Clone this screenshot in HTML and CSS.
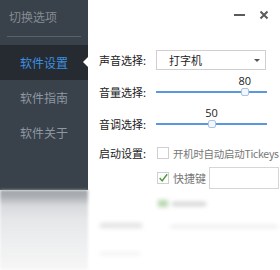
FILE: index.html
```html
<!DOCTYPE html>
<html lang="zh">
<head>
<meta charset="utf-8">
<link rel="stylesheet" href="styles.css">
</head>
<body>
<div class="stage">
  <div class="window">
    <aside class="sidebar">
      <div class="side-title">切换选项</div>
      <div class="side-sep"></div>
      <div class="side-item active">软件设置<span class="notch"></span></div>
      <div class="side-item">软件指南</div>
      <div class="side-item">软件关于</div>
    </aside>
    <main class="main">
      <div class="titlebar">
        <span class="btn-min"></span>
        <svg class="btn-close" width="10" height="10" viewBox="0 0 10 10"><path d="M1.5 1.5 L8.5 8.5 M8.5 1.5 L1.5 8.5" stroke="#5a5a5a" stroke-width="2"/></svg>
      </div>
      <div class="row r1">
        <span class="label">声音选择:</span>
        <div class="select"><span>打字机</span><span class="caret"></span></div>
      </div>
      <div class="row r2">
        <span class="label">音量选择:</span>
        <div class="slider"><div class="track"></div><div class="thumb" style="left:80%"><span class="val">80</span></div></div>
      </div>
      <div class="row r3">
        <span class="label">音调选择:</span>
        <div class="slider"><div class="track"></div><div class="thumb" style="left:50%"><span class="val">50</span></div></div>
      </div>
      <div class="row r4">
        <span class="label">启动设置:</span>
        <span class="check"></span>
        <span class="opt small">开机时自动启动Tickeys</span>
      </div>
      <div class="row r5">
        <span class="label"></span>
        <span class="check checked"><svg width="12" height="12" viewBox="0 0 12 12"><path d="M2 6 L5 9.5 L11 1.5" fill="none" stroke="#4d9a3c" stroke-width="1.8"/></svg></span>
        <span class="opt">快捷键</span>
        <span class="input"></span>
      </div>
    </main>
  </div>
  <div class="reflection">
    <div class="ref-side"></div>
    <div class="ref-main">
      <span class="blob b-green"></span>
      <span class="blob b-t1"></span>
      <span class="blob b-l1"></span>
      <span class="blob b-line"></span>
      <span class="blob b-l2"></span>
    </div>
  </div>
</div>
</body>
</html>
```
FILE: styles.css
```css
* { box-sizing: border-box; }
html, body { margin: 0; padding: 0; background: #fff; }
body { font-family: "Noto Sans CJK SC", "Noto Sans", sans-serif; width: 280px; height: 270px; overflow: hidden; }
.stage { width: 280px; height: 270px; }
.window { display: flex; height: 190px; }
.sidebar { flex: none; width: 88px; background: #39414a; display: flex; flex-direction: column; }
.side-title { height: 36px; line-height: 34px; padding-left: 9px; font-size: 12px; color: #858c94; }
.side-sep { height: 1px; margin: 0 7px 8px; background: #59616a; }
.side-item { position: relative; height: 35px; line-height: 35px; padding-left: 20px; font-size: 12px; color: #8d98a3; }
.side-item.active { background: #262b31; color: #3d8fe0; }
.notch { position: absolute; right: 0; top: 12px; width: 0; height: 0; border-top: 5px solid transparent; border-bottom: 5px solid transparent; border-right: 5px solid #fff; }
.main { flex: 1; min-width: 0; background: #fff; display: flex; flex-direction: column; padding-left: 11px; font-size: 11px; color: #222; }
.titlebar { height: 30px; display: flex; align-items: center; justify-content: flex-end; padding-right: 11px; gap: 14px; }
.btn-min { width: 11px; height: 2px; background: #5a5a5a; }
.row { display: flex; align-items: center; }
.r1 { margin-top: 14px; height: 32px; }
.r2 { height: 32px; }
.r3 { height: 32px; }
.r4 { height: 26px; }
.r5 { height: 24px; }
.label { width: 57px; flex: none; white-space: nowrap; }
.select { flex: none; width: 110px; height: 20px; border: 1px solid #cfcfcf; display: flex; align-items: center; justify-content: space-between; padding: 0 5px 0 12px; font-size: 11px; color: #222; }
.caret { width: 0; height: 0; border-left: 3px solid transparent; border-right: 3px solid transparent; border-top: 3px solid #555; }
.slider { flex: none; position: relative; width: 111px; height: 10px; }
.track { position: absolute; left: 0; right: 0; top: 4px; height: 2px; background: #5b97dc; }
.thumb { position: absolute; top: 1px; width: 8px; height: 8px; margin-left: -4px; background: #f4f6f8; border: 1px solid #a8c4e4; border-radius: 2px; }
.val { position: absolute; bottom: 7px; left: 50%; transform: translateX(-50%); font-family: "Open Sans", "Noto Sans", sans-serif; font-size: 11px; color: #222; }
.check { flex: none; width: 12px; height: 12px; border: 1px solid #cfcfcf; background: #fff; margin-left: 1px; margin-right: 4px; display: flex; align-items: center; justify-content: center; }
.check svg { margin-top: -1px; }
.opt { color: #777; font-size: 11px; white-space: nowrap; }
.opt.small { font-size: 10.5px; letter-spacing: -0.3px; }
.input { flex: none; width: 70px; height: 22px; border: 1px solid #d6d6d6; margin-left: 3px; }
.reflection { display: flex; height: 80px; }
.ref-side { flex: none; width: 88px; background: linear-gradient(to bottom, #a1a5aa 0, #a9adb1 6px, #d8dadd 16px, #e6e7e9 30px, #eeeff0 55px, #f6f6f6 80px); filter: blur(1.5px); }
.ref-main { flex: 1; position: relative; }
.blob { position: absolute; filter: blur(2px); }
.b-green { left: 70px; top: 10px; width: 10px; height: 7px; background: #b7d7ad; }
.b-t1 { left: 84px; top: 12px; width: 34px; height: 4px; background: #d0d0d0; }
.b-l1 { left: 12px; top: 33px; width: 42px; height: 5px; background: #e2e2e2; }
.b-line { left: 82px; top: 35px; width: 108px; height: 3px; background: #ebebeb; }
.b-l2 { left: 12px; top: 62px; width: 40px; height: 3px; background: #f0f0f0; }
```
